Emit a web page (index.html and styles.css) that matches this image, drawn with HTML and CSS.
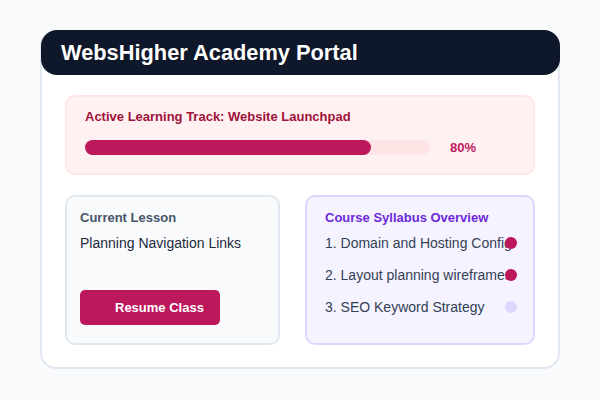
FILE: index.html
```html
<!DOCTYPE html>
<html lang="en">
<head>
<meta charset="UTF-8">
<meta name="viewport" content="width=device-width, initial-scale=1.0">
<title>WebsHigher Academy Portal</title>
<link rel="stylesheet" href="styles.css">
</head>
<body>
    <div class="portal">
        <div class="portal_header">WebsHigher Academy Portal</div>

        <div class="portal_body">
            <div class="track_box">
                <div class="track_title">Active Learning Track: Website Launchpad</div>
                <div class="track_row">
                    <div class="track_bar">
                        <div class="track_fill" style="width: 83%;"></div>
                    </div>
                    <span class="track_percent">80%</span>
                </div>
            </div>

            <div class="cards">
                <div class="card lesson_card">
                    <div class="card_title">Current Lesson</div>
                    <div class="lesson_name">Planning Navigation Links</div>
                    <button class="resume_btn">Resume Class</button>
                </div>

                <div class="card syllabus_card">
                    <div class="card_title syllabus_title">Course Syllabus Overview</div>
                    <ul class="syllabus_list">
                        <li>1. Domain and Hosting Config<span class="dot done"></span></li>
                        <li>2. Layout planning wireframes<span class="dot done"></span></li>
                        <li>3. SEO Keyword Strategy<span class="dot"></span></li>
                    </ul>
                </div>
            </div>
        </div>
    </div>
</body>
</html>
```

FILE: styles.css
```css
body{
    margin: 0px;
    padding: 30px 40px;
    background-color: #f8fafc;
    font-family: "Liberation Sans", Arial, sans-serif;
}
.portal{
    height: 335px;
    background-color: #fff;
    border: 2px solid #e2e8f0;
    border-radius: 16px;
}
.portal_header{
    margin: -2px -2px 0 -1px;
    height: 45px;
    padding-left: 20px;
    display: flex;
    align-items: center;
    background-color: #0f172a;
    color: #fff;
    font-size: 21.8px;
    font-weight: bold;
    border-radius: 16px;
}
.portal_body{
    padding: 20px 23px 0 23px;
}
.track_box{
    height: 80px;
    box-sizing: border-box;
    padding: 12px 18px 0 18px;
    background-color: #fff1f2;
    border: 2px solid #ffe4e6;
    border-radius: 10px;
}
.track_title{
    color: #9f1239;
    font-size: 13px;
    font-weight: bold;
    line-height: 16px;
}
.track_row{
    display: flex;
    align-items: center;
    gap: 20px;
    margin-top: 15px;
}
.track_bar{
    flex: 1;
    height: 15px;
    background-color: #ffe4e6;
    border-radius: 8px;
}
.track_fill{
    height: 100%;
    background-color: #be185d;
    border-radius: 8px;
}
.track_percent{
    width: 65px;
    color: #be185d;
    font-size: 13px;
    font-weight: bold;
}
.cards{
    display: grid;
    grid-template-columns: 215px minmax(0, 1fr);
    gap: 25px;
    margin-top: 20px;
}
.card{
    height: 150px;
    box-sizing: border-box;
    border-radius: 10px;
    padding: 13px 16px 18px 13px;
}
.lesson_card{
    display: flex;
    flex-direction: column;
    align-items: flex-start;
    background-color: #f8fafc;
    border: 2px solid #e2e8f0;
}
.card_title{
    color: #475569;
    font-size: 13px;
    font-weight: bold;
    line-height: 16px;
}
.lesson_name{
    margin-top: 7px;
    color: #1e293b;
    font-size: 14px;
    line-height: 20px;
}
.resume_btn{
    margin-top: auto;
    width: 140px;
    height: 35px;
    padding: 0 0 0 35px;
    text-align: left;
    background-color: #be185d;
    color: #fff;
    border: none;
    border-radius: 5px;
    font-family: inherit;
    font-size: 13px;
    font-weight: bold;
}
.syllabus_card{
    background-color: #f5f3ff;
    border: 2px solid #ddd6fe;
    padding-left: 18px;
}
.syllabus_title{
    color: #6d28d9;
}
.syllabus_list{
    list-style: none;
    margin: 1px 0 0 0;
    padding: 0;
}
.syllabus_list li{
    position: relative;
    line-height: 32px;
    font-size: 14px;
    color: #334155;
    white-space: nowrap;
}
.dot{
    position: absolute;
    right: 0;
    top: 10px;
    width: 12px;
    height: 12px;
    border-radius: 50%;
    background-color: #ddd6fe;
}
.dot.done{
    background-color: #be185d;
}
```
